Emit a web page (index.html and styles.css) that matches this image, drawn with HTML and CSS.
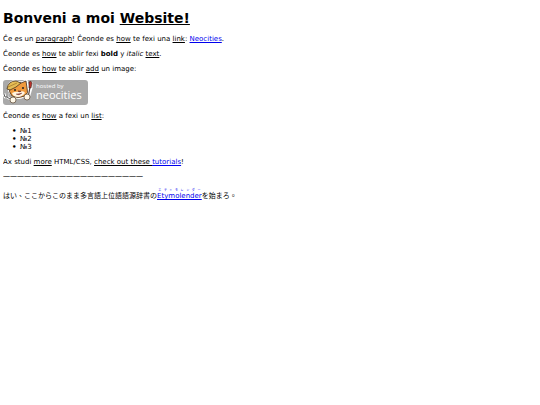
FILE: index.html
```
<!DOCTYPE html>
<html lang="art">
<head>
<meta charset="UTF-8">
<meta name="viewport" content="width=device-width, initial-scale=1.0">
<title>Bonveni a moi Website!</title>
<link rel="stylesheet" href="styles.css">
</head>
<body>

<h1>Bonveni a moi <u>Website!</u></h1>

<p>Ĉe es un <u>paragraph</u>! Ĉeonde es <u>how</u> te fexi una <u>link</u>: <a href="#neocities">Neocities</a>.</p>

<p>Ĉeonde es <u>how</u> te ablir fexi <strong>bold</strong> y <em>italic</em> <u>text</u>.</p>

<p>Ĉeonde es <u>how</u> te ablir <u>add</u> un image:</p>

<svg class="badge" viewBox="0 0 85 25" role="img" aria-label="hosted by neocities">
  <rect width="85" height="25" rx="3" fill="#a9a9a9"/>
  <!-- cat -->
  <path d="M5 6 Q7 0 12 1 L18 2 L24 0 L26 8 Q27 14 22 17 Q16 20 10 17 L6 12 Z" fill="#fff" stroke="#fff" stroke-width="1" stroke-linejoin="round"/>
  <path d="M7 6 Q12 1 18 3 L23 1 L24 8 Q26 13 22 16 Q15 19 9 16 Q5 12 7 6 Z" fill="#ef9a3d" stroke="#3b2b20" stroke-width=".8" stroke-linejoin="round"/>
  <path d="M4 9 Q5 1 13 1 L18 3 L13 7 L7 10 Z" fill="#e5bd55" stroke="#4a351f" stroke-width=".8" stroke-linejoin="round"/>
  <path d="M5 7 L14 3" stroke="#a87b2c" stroke-width=".8"/>
  <path d="M9 13 Q13 11 16 12 Q21 10 22 13 Q19 17 15 17 Q10 17 9 13 Z" fill="#fff4df"/>
  <circle cx="12" cy="10" r="1" fill="#222"/>
  <circle cx="20" cy="8" r="1" fill="#222"/>
  <path d="M15 11 h3 l-1 1 z M13 14 q3 2 6 -1" fill="#933" stroke="#5a2a20" stroke-width=".5"/>
  <!-- wrench and brush -->
  <path d="M1 14 L2 17 L4 17 L10 21 M4 13 L4 17" fill="none" stroke="#fff" stroke-width="2.500"/>
  <path d="M1 14 L2 17 L4 17 L10 21 M4 13 L4 17" fill="none" stroke="#555" stroke-width="1"/>
  <path d="M28 2 L28 8 L25 18" fill="none" stroke="#fff" stroke-width="3"/>
  <path d="M27 7 L25 18" fill="none" stroke="#53433a" stroke-width="1.200"/>
  <path d="M26 2 Q28 0 29 3 L28 8 L26 8 Z" fill="#b9312c" stroke="#3b2b20" stroke-width=".6"/>
  <circle cx="10" cy="20" r="3" fill="#fff8e8" stroke="#54402d" stroke-width=".7"/>
  <circle cx="24" cy="17" r="3" fill="#fff8e8" stroke="#54402d" stroke-width=".7"/>
  <text class="badge-small" x="33" y="8">hosted by</text>
  <text class="badge-name" x="33" y="19">neocities</text>
</svg>

<p>Ĉeonde es <u>how</u> a fexi un <u>list</u>:</p>

<ul>
  <li>№1</li>
  <li>№2</li>
  <li>№3</li>
</ul>

<p>Ax studi <u>more</u> HTML/CSS, <u>check out these <a href="#tutorials">tutorials</a></u>!</p>

<p>一一一一一一一一一一一一一一一一一一一一</p>

<p>はい、ここからこのまま多言語上位語語源辞書の<a href="#etymolender"><ruby>Etymolender<rt>エティモレンダー</rt></ruby></a>を始まろ。</p>

</body>
</html>
```
FILE: styles.css
```
body {
  margin: 10px 3px;
  background: white;
  color: black;
  font-family: Verdana, "DejaVu Sans", "Noto Sans CJK TC", sans-serif;
  font-size: 7px;
  line-height: 8px;
}
h1 {
  margin: 0 0 9px;
  font-size: 14px;
  line-height: 16px;
}
p, ul {
  margin: 7px 0;
}
ul {
  padding-left: 17px;
  list-style: none;
}
li::before {
  content: "•";
  display: inline-block;
  width: 8px;
  margin-left: -8px;
  font-weight: bold;
}
a {
  color: #0000ee;
}
.badge {
  display: block;
  width: 85px;
  height: 25px;
}
.badge text {
  fill: white;
  font-family: "Open Sans", sans-serif;
}
.badge-small {
  font-size: 6px;
}
.badge-name {
  font-size: 11px;
}
rt {
  font-size: 3px;
  line-height: 3px;
}
```
